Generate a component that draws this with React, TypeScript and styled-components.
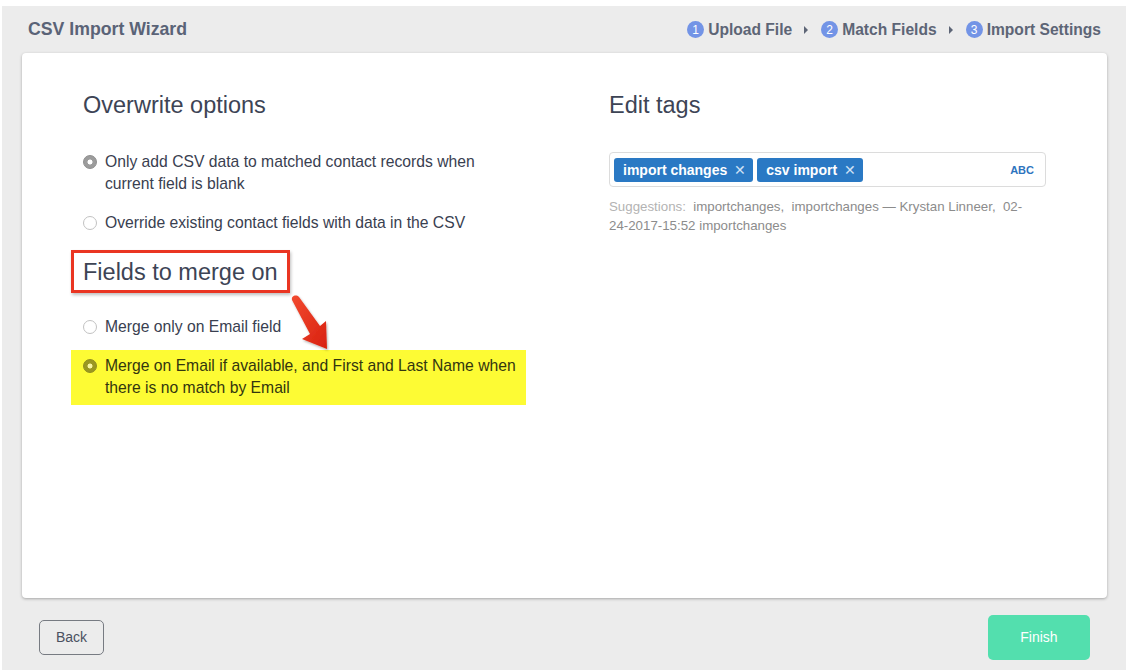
import React from "react";
import styled, { createGlobalStyle } from "styled-components";

const Global = createGlobalStyle`
  html, body { margin: 0; padding: 0; background: #ffffff; }
  body { font-family: "Liberation Sans", Arial, sans-serif; }
  * { box-sizing: border-box; }
`;

const Page = styled.div`
  margin: 6px 0 0 2px;
  height: 664px;
  background: #ececec;
  display: flex;
  flex-direction: column;
`;

const Header = styled.header`
  height: 47px;
  flex: none;
  display: flex;
  align-items: center;
  justify-content: space-between;
  padding: 0 25px 0 26px;
`;

const Title = styled.h1`
  margin: 0;
  font-size: 17.7px;
  font-weight: 700;
  color: #5a6377;
`;

const Steps = styled.nav`
  display: flex;
  align-items: center;
`;

const Step = styled.span`
  display: flex;
  align-items: center;
  gap: 4px;
  font-size: 15.6px;
  font-weight: 700;
  color: #5d6576;
`;

const StepNum = styled.span`
  width: 17px;
  height: 17px;
  border-radius: 50%;
  background: #7394e6;
  color: #ffffff;
  font-size: 12px;
  font-weight: 400;
  display: flex;
  align-items: center;
  justify-content: center;
`;

const Caret = styled.span`
  width: 0;
  height: 0;
  border-top: 4px solid transparent;
  border-bottom: 4px solid transparent;
  border-left: 4px solid #5d6576;
  margin: 0 13px 0 12px;
`;

const Card = styled.main`
  flex: none;
  height: 545px;
  margin: 0 19px 0 20px;
  background: #ffffff;
  border-radius: 4px;
  box-shadow: 0 1px 3px rgba(0, 0, 0, 0.3);
  padding: 38px 61px 0 61px;
  display: grid;
  grid-template-columns: 478px 437px;
  column-gap: 48px;
  align-items: start;
  position: relative;
`;

const Column = styled.section`
  display: flex;
  flex-direction: column;
  align-items: flex-start;
`;

const SectionTitle = styled.h2<{ $boxed?: boolean }>`
  margin: 0;
  font-size: 23.5px;
  line-height: 28px;
  font-weight: 400;
  color: #3d4455;
  ${(p) =>
    p.$boxed
      ? `
    margin: 16px 0 23px -12px;
    padding: 4.5px 9px 4.5px 9px;
    border: 3px solid #ea3522;
    box-shadow: 1px 2px 3px rgba(0,0,0,0.25);
  `
      : `margin-bottom: 32px;`}
`;

const RadioList = styled.div`
  display: flex;
  flex-direction: column;
  gap: 17px;
  align-items: flex-start;
`;

const Option = styled.label<{ $highlight?: boolean }>`
  display: flex;
  align-items: flex-start;
  gap: 8px;
  font-size: 15.7px;
  line-height: 22px;
  color: #394050;
  ${(p) =>
    p.$highlight
      ? `
    background: #fdfb34;
    margin: -5px 0 0 -12px;
    padding: 5px 3px 6px 12px;
    color: #33360f;
  `
      : ``}
`;

const OptionText = styled.span`
  max-width: 418px;
`;

const Radio = styled.span<{ $checked?: boolean; $highlight?: boolean }>`
  flex: none;
  width: 14px;
  height: 14px;
  margin-top: 4px;
  border-radius: 50%;
  border: 1px solid
    ${(p) => (p.$checked ? (p.$highlight ? "#8e8b1e" : "#8d8d8d") : "#c2c2c2")};
  background: ${(p) =>
    p.$checked
      ? p.$highlight
        ? "radial-gradient(circle, #f8f5a0 0 2.2px, #9a9722 2.8px)"
        : "radial-gradient(circle, #ffffff 0 2.2px, #9c9c9c 2.8px)"
      : "#ffffff"};
`;

const TagInput = styled.div`
  margin-top: 1px;
  width: 437px;
  height: 35px;
  border: 1px solid #dcdcdc;
  border-radius: 4px;
  display: flex;
  align-items: center;
  padding: 0 11px 0 4px;
  gap: 4px;
`;

const Tag = styled.span`
  height: 24px;
  display: flex;
  align-items: center;
  gap: 7px;
  padding: 0 7px 0 9px;
  background: #2a79c4;
  border-radius: 3px;
  color: #ffffff;
  font-size: 14px;
  font-weight: 700;
`;

const TagX = styled.span`
  font-size: 14px;
  font-weight: 400;
  color: #cfe1f5;
  line-height: 1;
`;

const Abc = styled.span`
  margin-left: auto;
  font-size: 11px;
  font-weight: 700;
  color: #2d74be;
`;

const Suggestions = styled.p`
  margin: 10px 0 0;
  width: 425px;
  font-size: 13.3px;
  line-height: 19px;
  color: #8c8c8c;
`;

const Muted = styled.span`
  color: #b3b3b3;
`;

const SuggestionList = styled.span`
  color: #8c8c8c;
`;

const Footer = styled.footer`
  flex: 1;
  display: flex;
  align-items: center;
  justify-content: space-between;
  padding: 6px 36px 0 37px;
`;

const BackButton = styled.button`
  width: 65px;
  height: 35px;
  border: 1px solid #777b82;
  border-radius: 5px;
  background: transparent;
  font-family: inherit;
  font-size: 14px;
  color: #4a5060;
`;

const FinishButton = styled.button`
  width: 102px;
  height: 45px;
  border: none;
  border-radius: 5px;
  background: #53dfae;
  font-family: inherit;
  font-size: 14px;
  color: #ffffff;
`;

const Arrow = styled.svg`
  position: absolute;
  left: 267px;
  top: 241px;
  width: 48px;
  height: 60px;
  overflow: visible;
`;

export default function App() {
  return (
    <>
      <Global />
      <Page>
        <Header>
          <Title>CSV Import Wizard</Title>
          <Steps>
            <Step>
              <StepNum>1</StepNum>Upload File
            </Step>
            <Caret />
            <Step>
              <StepNum>2</StepNum>Match Fields
            </Step>
            <Caret />
            <Step>
              <StepNum>3</StepNum>Import Settings
            </Step>
          </Steps>
        </Header>
        <Card>
          <Column>
            <SectionTitle>Overwrite options</SectionTitle>
            <RadioList>
              <Option>
                <Radio $checked />
                <OptionText>
                  Only add CSV data to matched contact records when current field is blank
                </OptionText>
              </Option>
              <Option>
                <Radio />
                <OptionText>Override existing contact fields with data in the CSV</OptionText>
              </Option>
            </RadioList>
            <SectionTitle $boxed>Fields to merge on</SectionTitle>
            <RadioList>
              <Option>
                <Radio />
                <OptionText>Merge only on Email field</OptionText>
              </Option>
              <Option $highlight>
                <Radio $checked $highlight />
                <OptionText>
                  Merge on Email if available, and First and Last Name when there is no match by Email
                </OptionText>
              </Option>
            </RadioList>
          </Column>
          <Column>
            <SectionTitle>Edit tags</SectionTitle>
            <TagInput>
              <Tag>
                import changes<TagX>✕</TagX>
              </Tag>
              <Tag>
                csv import<TagX>✕</TagX>
              </Tag>
              <Abc>ABC</Abc>
            </TagInput>
            <Suggestions>
              <Muted>Suggestions:&nbsp; </Muted>
              <SuggestionList>
                importchanges,&nbsp; importchanges — Krystan Linneer,&nbsp; 02-24-2017-15:52 importchanges
              </SuggestionList>
            </Suggestions>
          </Column>
          <Arrow viewBox="0 0 48 60">
            <defs>
              <linearGradient id="ag" x1="0" y1="0" x2="1" y2="1">
                <stop offset="0" stopColor="#f24a30" />
                <stop offset="1" stopColor="#d8200f" />
              </linearGradient>
              <filter id="as" x="-30%" y="-30%" width="160%" height="160%">
                <feDropShadow dx="1" dy="1.5" stdDeviation="1" floodColor="#000" floodOpacity="0.3" />
              </filter>
            </defs>
            <path
              d="M3 6 C2 2 7 0 10 3 L31 32 L37 27 L38 55 L13 45 L21 40 Z"
              fill="url(#ag)"
              filter="url(#as)"
            />
          </Arrow>
        </Card>
        <Footer>
          <BackButton>Back</BackButton>
          <FinishButton>Finish</FinishButton>
        </Footer>
      </Page>
    </>
  );
}
